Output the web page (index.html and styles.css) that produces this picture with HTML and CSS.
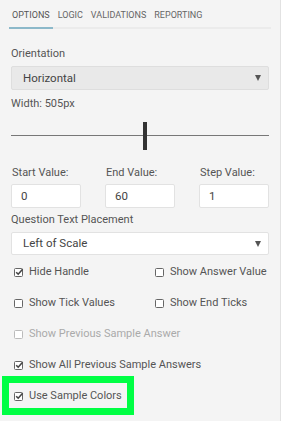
FILE: index.html
```html
<!DOCTYPE html>
<html lang="en">
<head>
    <meta charset="UTF-8">
    <meta name="viewport" content="width=device-width, initial-scale=1.0">
    <title>Slider Options</title>
    <link rel="stylesheet" href="styles.css">
</head>
<body>
    <div class="panel">
        <div class="tabs">
            <span class="tab active">Options</span>
            <span class="tab">Logic</span>
            <span class="tab">Validations</span>
            <span class="tab">Reporting</span>
        </div>

        <div class="content">
            <label class="field-label">Orientation</label>
            <div class="select disabled">Horizontal<span class="caret"></span></div>

            <div class="width-label">Width: 505px</div>
            <div class="slider"><span class="handle"></span></div>

            <div class="values">
                <div class="value">
                    <label class="field-label">Start Value:</label>
                    <div class="input">0</div>
                </div>
                <div class="value">
                    <label class="field-label">End Value:</label>
                    <div class="input">60</div>
                </div>
                <div class="value">
                    <label class="field-label">Step Value:</label>
                    <div class="input">1</div>
                </div>
            </div>

            <label class="field-label">Question Text Placement</label>
            <div class="select">Left of Scale<span class="caret"></span></div>

            <div class="checks">
                <div class="check on"><svg class="box" viewBox="0 0 10 10"><rect x="0.5" y="1.5" width="8" height="8" rx="1"/><path d="M2.2 5.2 L4.2 7.2 L8.6 2.2"/></svg>Hide Handle</div>
                <div class="check"><svg class="box" viewBox="0 0 10 10"><rect x="0.5" y="1.5" width="8" height="8" rx="1"/></svg>Show Answer Value</div>
                <div class="check"><svg class="box" viewBox="0 0 10 10"><rect x="0.5" y="1.5" width="8" height="8" rx="1"/></svg>Show Tick Values</div>
                <div class="check"><svg class="box" viewBox="0 0 10 10"><rect x="0.5" y="1.5" width="8" height="8" rx="1"/></svg>Show End Ticks</div>
                <div class="check wide muted"><svg class="box" viewBox="0 0 10 10"><rect x="0.5" y="1.5" width="8" height="8" rx="1"/></svg>Show Previous Sample Answer</div>
                <div class="check wide on"><svg class="box" viewBox="0 0 10 10"><rect x="0.5" y="1.5" width="8" height="8" rx="1"/><path d="M2.2 5.2 L4.2 7.2 L8.6 2.2"/></svg>Show All Previous Sample Answers</div>
                <div class="check wide on highlight"><svg class="box" viewBox="0 0 10 10"><rect x="0.5" y="1.5" width="8" height="8" rx="1"/><path d="M2.2 5.2 L4.2 7.2 L8.6 2.2"/></svg>Use Sample Colors</div>
            </div>
        </div>
    </div>
</body>
</html>
```

FILE: styles.css
```css
body { margin: 0; background: #f4f4f4; font-family: Roboto, "Noto Sans", sans-serif; font-size: 11px; line-height: 13px; color: #555; }
.panel { width: 281px; height: 421px; border-right: 1px solid #e2e2e2; box-sizing: border-box; }

.tabs { display: flex; gap: 2px; margin: 0 9px; padding-top: 10px; border-bottom: 2px solid #ebebeb; }
.tab { font-size: 9px; line-height: 11px; text-transform: uppercase; color: #666; padding: 0 3px 6px 3px; margin-bottom: -2px; border-bottom: 2px solid transparent; }
.tab.active { color: #555; border-bottom-color: #8cb9ca; }

.content { padding: 18px 11px 0 11px; }
.field-label { display: block; color: #555; margin-bottom: 6px; }

.select { position: relative; height: 23px; line-height: 21px; padding-left: 11px; background: #fff; border: 1px solid #e2e2e2; border-radius: 2px; color: #444; box-sizing: border-box; font-size: 11.5px; }
.select.disabled { height: 24px; line-height: 22px; background: #e9e9e9; border-color: #dedede; margin-bottom: 7px; }
.caret { position: absolute; right: 7px; top: 8px; width: 0; height: 0; border-left: 3px solid transparent; border-right: 3px solid transparent; border-top: 6px solid #555; }

.width-label { color: #555; }
.slider { position: relative; height: 1px; background: #777; margin: 25px 0 30px 0; }
.handle { position: absolute; left: 132px; top: -13px; width: 4px; height: 28px; background: #333; }

.values { display: flex; justify-content: space-between; margin-bottom: 5px; }
.value { width: 70px; }
.value .field-label { margin-bottom: 5px; padding-left: 1px; }
.input { height: 24px; line-height: 22px; background: #fff; border: 1px solid #e2e2e2; border-radius: 2px; padding-left: 9px; color: #444; box-sizing: border-box; font-size: 11.5px; }

.checks { display: grid; grid-template-columns: 141px 1fr; row-gap: 18px; margin-top: 10px; padding-left: 3px; }
.check { display: flex; align-items: center; color: #555; height: 13px; white-space: nowrap; }
.check.wide { grid-column: 1 / 3; }
.check.muted { color: #aaa; }
.box { width: 10px; height: 10px; margin-right: 5px; flex: none; }
.box rect { fill: #fff; stroke: #666; stroke-width: 1; }
.box path { fill: none; stroke: #444; stroke-width: 1.6; }
.check.muted .box rect { stroke: #bbb; }
.check.highlight { width: max-content; padding: 6px 5px; margin: -6px 0 -6px -5px; outline: 7px solid #00ff44; }
```
